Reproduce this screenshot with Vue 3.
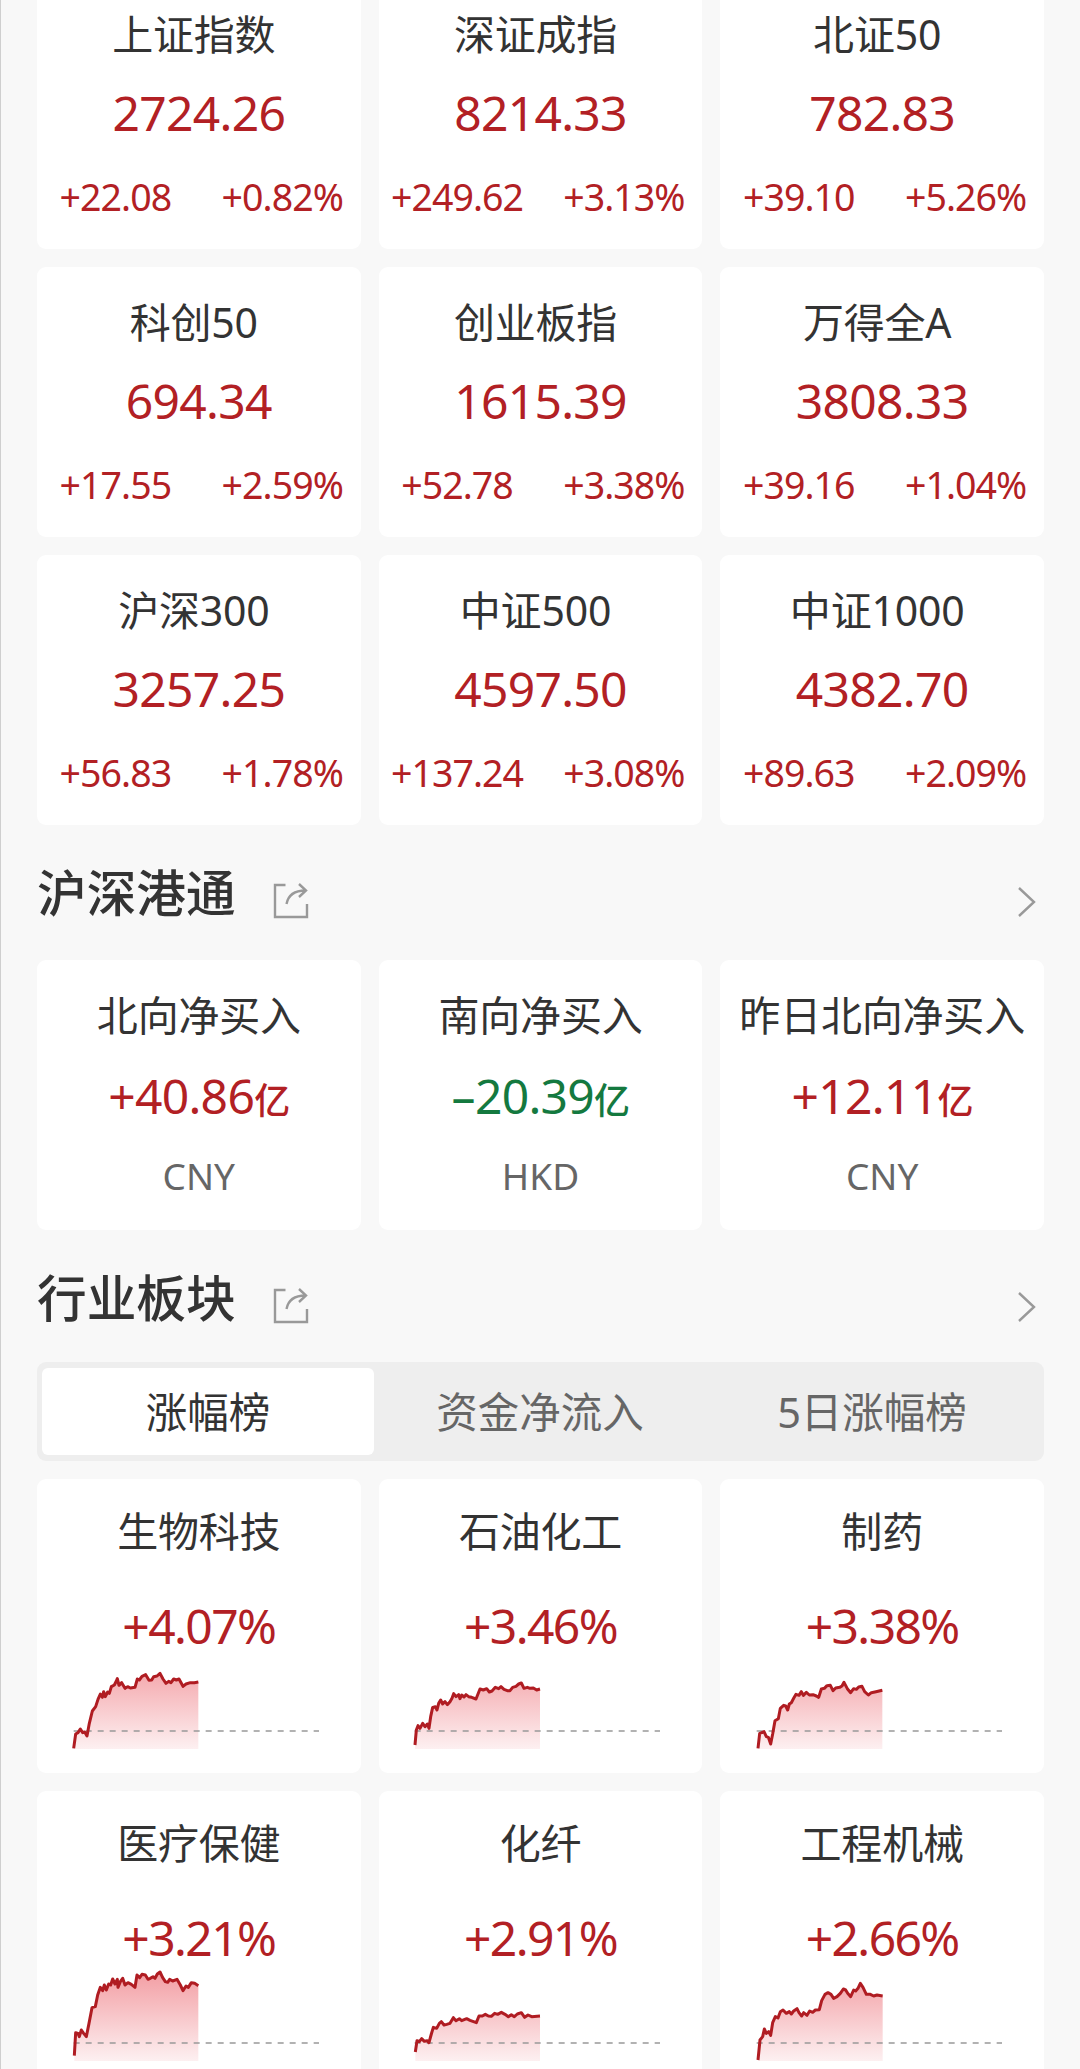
<script setup>
import { ref } from 'vue'

const indices = [
  { name: '上证指数', value: '2724.26', change: '+22.08', percent: '+0.82%' },
  { name: '深证成指', value: '8214.33', change: '+249.62', percent: '+3.13%' },
  { name: '北证50', value: '782.83', change: '+39.10', percent: '+5.26%' },
  { name: '科创50', value: '694.34', change: '+17.55', percent: '+2.59%' },
  { name: '创业板指', value: '1615.39', change: '+52.78', percent: '+3.38%' },
  { name: '万得全A', value: '3808.33', change: '+39.16', percent: '+1.04%' },
  { name: '沪深300', value: '3257.25', change: '+56.83', percent: '+1.78%' },
  { name: '中证500', value: '4597.50', change: '+137.24', percent: '+3.08%' },
  { name: '中证1000', value: '4382.70', change: '+89.63', percent: '+2.09%' },
]

const flows = [
  { name: '北向净买入', value: '+40.86', currency: 'CNY', down: false },
  { name: '南向净买入', value: '–20.39', currency: 'HKD', down: true },
  { name: '昨日北向净买入', value: '+12.11', currency: 'CNY', down: false },
]

const tabs = ['涨幅榜', '资金净流入', '5日涨幅榜']
const activeTab = ref(0)

// Each line is a polyline; x and y give the top-left corner of its drawing area.
const sectors = [
  {
    name: '生物科技', percent: '+4.07%', x: 122, y: 219,
    line: '130,505 136,462 143,458 150,447 157,458 163,456 170,468 177,430 186,393 196,380 203,358 210,342 216,352 220,335 225,350 232,336 237,340 243,320 252,315 258,303 261,296 266,316 274,308 284,325 292,320 300,324 314,322 321,297 327,300 335,289 346,284 356,301 364,300 370,290 380,288 389,280 398,297 407,310 415,304 422,308 430,297 438,300 446,297 458,319 467,312 480,308 492,308 504,306',
  },
  {
    name: '石油化工', percent: '+3.46%', x: 126, y: 219,
    line: '135,495 139,450 144,437 150,445 158,430 165,440 172,432 177,445 182,410 188,382 196,380 201,390 206,370 212,360 218,372 225,365 232,374 240,365 246,355 251,341 258,350 266,344 270,356 275,345 282,351 288,344 296,350 305,352 318,357 324,342 330,327 340,330 350,326 358,336 366,333 376,322 386,326 393,320 402,328 412,332 420,332 428,322 438,319 446,312 454,309 462,325 472,322 480,325 490,324 500,330 510,327',
  },
  {
    name: '制药', percent: '+3.38%', x: 131, y: 219,
    line: '143,505 148,460 154,458 161,455 168,470 174,472 181,492 187,462 194,422 204,416 210,385 220,376 226,378 232,390 237,372 243,368 250,355 257,343 266,346 273,335 279,346 288,337 297,345 308,344 318,348 325,352 333,327 342,325 350,317 360,316 368,332 376,324 388,322 395,318 401,307 411,326 421,338 430,326 438,328 445,321 455,319 463,335 474,345 483,338 497,335 516,331',
  },
  {
    name: '医疗保健', percent: '+3.21%', x: 122, y: 1155,
    line: '132,1427 136,1358 143,1360 147,1370 153,1350 160,1360 168,1370 176,1330 185,1283 195,1280 202,1245 210,1222 217,1232 222,1215 228,1230 235,1212 241,1215 247,1197 254,1212 261,1198 263,1222 270,1205 277,1195 284,1215 293,1208 303,1213 314,1222 320,1185 328,1193 335,1183 345,1185 353,1198 360,1195 368,1190 374,1195 381,1182 389,1176 397,1193 405,1205 412,1207 418,1198 427,1203 440,1198 450,1215 458,1232 467,1218 474,1222 483,1208 493,1210 504,1217',
  },
  {
    name: '化纤', percent: '+2.91%', x: 126, y: 1155,
    line: '136,1416 141,1382 148,1385 155,1376 163,1384 172,1382 177,1388 184,1362 190,1342 200,1345 208,1330 214,1325 222,1335 230,1333 240,1330 250,1313 258,1322 268,1316 275,1322 290,1316 300,1321 319,1328 327,1308 337,1308 346,1303 355,1308 364,1309 374,1300 383,1303 394,1297 405,1303 415,1310 424,1304 433,1310 442,1302 454,1298 464,1312 474,1305 485,1310 510,1308',
  },
  {
    name: '工程机械', percent: '+2.66%', x: 131, y: 1155,
    line: '143,1440 149,1380 157,1370 162,1347 168,1360 175,1355 181,1366 187,1328 195,1310 203,1314 210,1295 218,1290 228,1300 237,1295 243,1302 250,1293 260,1286 266,1298 274,1308 280,1298 290,1306 298,1293 307,1297 315,1290 327,1289 334,1262 344,1243 353,1238 362,1243 370,1255 380,1250 390,1240 399,1227 406,1230 412,1240 421,1250 430,1230 436,1233 443,1225 450,1210 458,1222 468,1243 480,1243 490,1248 500,1245 517,1248',
  },
]

// Closes the polyline down to the bottom of the drawing area for the shaded fill.
function area(s) {
  const pts = s.line.split(' ')
  const firstX = pts[0].split(',')[0]
  const lastX = pts[pts.length - 1].split(',')[0]
  const base = s.y + 288
  return `${firstX},${base} ${s.line} ${lastX},${base}`
}
</script>

<template>
  <main class="page">
    <section class="grid indices">
      <article v-for="i in indices" :key="i.name" class="card">
        <h3 class="name name-index">{{ i.name }}</h3>
        <p class="value">{{ i.value }}</p>
        <div class="changes">
          <span>{{ i.change }}</span>
          <span>{{ i.percent }}</span>
        </div>
      </article>
    </section>

    <header class="heading">
      <h2>沪深港通</h2>
      <svg class="share" viewBox="0 0 36 36"><path d="M12.5 2H2v32h32V21" /><path d="M13.5 21C15 13 20 7.500 32.500 7.500M26 1l7 6.500-7 6.500" /></svg>
      <svg class="arrow" viewBox="0 0 20 32"><path d="M2 2l15 14L2 30" /></svg>
    </header>

    <section class="grid">
      <article v-for="f in flows" :key="f.name" class="card">
        <h3 class="name">{{ f.name }}</h3>
        <p class="value flow" :class="{ down: f.down }">{{ f.value }}<span class="unit">亿</span></p>
        <p class="currency">{{ f.currency }}</p>
      </article>
    </section>

    <header class="heading heading-sector">
      <h2>行业板块</h2>
      <svg class="share" viewBox="0 0 36 36"><path d="M12.5 2H2v32h32V21" /><path d="M13.5 21C15 13 20 7.500 32.500 7.500M26 1l7 6.500-7 6.500" /></svg>
      <svg class="arrow" viewBox="0 0 20 32"><path d="M2 2l15 14L2 30" /></svg>
    </header>

    <nav class="tabs">
      <button
        v-for="(t, n) in tabs"
        :key="t"
        class="tab"
        :class="{ active: n === activeTab }"
        @click="activeTab = n"
      >{{ t }}</button>
    </nav>

    <section class="grid">
      <article v-for="(s, n) in sectors" :key="s.name" class="card sector">
        <h3 class="name">{{ s.name }}</h3>
        <p class="value percent">{{ s.percent }}</p>
        <svg class="chart" :viewBox="`${s.x} ${s.y} 768 291`">
          <defs>
            <linearGradient :id="`fill-${n}`" gradientUnits="userSpaceOnUse" x1="0" :y1="s.y" x2="0" :y2="s.y + 288">
              <stop offset="0" stop-color="#f2979d" />
              <stop offset="1" stop-color="#fdf0f1" />
            </linearGradient>
          </defs>
          <polygon :points="area(s)" :fill="`url(#fill-${n})`" />
          <line class="base" :x1="s.x + 8" :x2="s.x + 744" :y1="s.y + 234" :y2="s.y + 234" />
          <polyline class="trend" :points="s.line" />
        </svg>
      </article>
    </section>
  </main>
</template>

<style>
body {
  margin: 0;
  background: #f8f8f8;
}
</style>

<style scoped>
.page {
  box-sizing: border-box;
  width: 1080px;
  height: 2069px;
  overflow: hidden;
  padding: 0 36px;
  border-left: 1px solid #cfcfcf;
  background: #f8f8f8;
  color: #333;
  font-family: "Noto Sans", "Noto Sans CJK SC", sans-serif;
}
h2, h3, p {
  margin: 0;
  font-weight: 400;
}
.grid {
  display: grid;
  grid-template-columns: repeat(3, 1fr);
  gap: 18px;
}
.indices {
  margin-top: -21px;
}
.card {
  box-sizing: border-box;
  height: 270px;
  padding-top: 27px;
  border-radius: 9px;
  background: #fff;
  text-align: center;
  white-space: nowrap;
}
.name {
  font-size: 41px;
  line-height: 56px;
  letter-spacing: -0.2px;
}
.name-index {
  padding-right: 10px;
}
.value {
  margin-top: 19px;
  font-size: 48px;
  line-height: 64px;
  letter-spacing: -0.7px;
  color: #b22024;
}
.flow {
  margin-top: 21px;
}
.down {
  color: #14793f;
}
.unit {
  font-size: 36px;
  font-weight: 500;
}
.changes {
  display: grid;
  grid-template-columns: 1fr 1fr;
  column-gap: 10px;
  margin-top: 27px;
  font-size: 37.5px;
  line-height: 50px;
  letter-spacing: -0.95px;
  color: #b22024;
}
.currency {
  margin-top: 18px;
  font-size: 37px;
  line-height: 50px;
  color: #666;
}
.heading {
  display: flex;
  align-items: flex-start;
  height: 135px;
}
.heading-sector {
  height: 132px;
}
.heading h2 {
  font-size: 49.7px;
  font-weight: 500;
  line-height: 136px;
}
.share {
  width: 36px;
  height: 36px;
  margin: 58px 0 0 37px;
  fill: none;
  stroke: #999;
  stroke-width: 2.4;
}
.arrow {
  width: 20px;
  height: 32px;
  margin: 61px 7px 0 auto;
  fill: none;
  stroke: #999;
  stroke-width: 2.4;
}
.tabs {
  box-sizing: border-box;
  display: flex;
  height: 99px;
  margin-bottom: 18px;
  padding: 6px 6px 6px 5px;
  border-radius: 9px;
  background: #eee;
}
.tab {
  flex: 1;
  padding: 2px 0 0;
  border: 0;
  border-radius: 6px;
  background: none;
  color: #666;
  font-family: inherit;
  font-size: 41.5px;
  line-height: 85px;
}
.tab.active {
  background: #fff;
  color: #333;
}
.sector {
  height: 294px;
  padding-top: 24px;
}
.percent {
  margin-top: 35px;
  letter-spacing: -1.6px;
}
.chart {
  display: block;
  width: 256px;
  height: 97px;
  margin: -5px auto 0;
}
.trend {
  fill: none;
  stroke: #b01c22;
  stroke-width: 9;
  stroke-linejoin: round;
}
.base {
  stroke: #999;
  stroke-width: 4;
  stroke-dasharray: 18 18;
}
</style>
